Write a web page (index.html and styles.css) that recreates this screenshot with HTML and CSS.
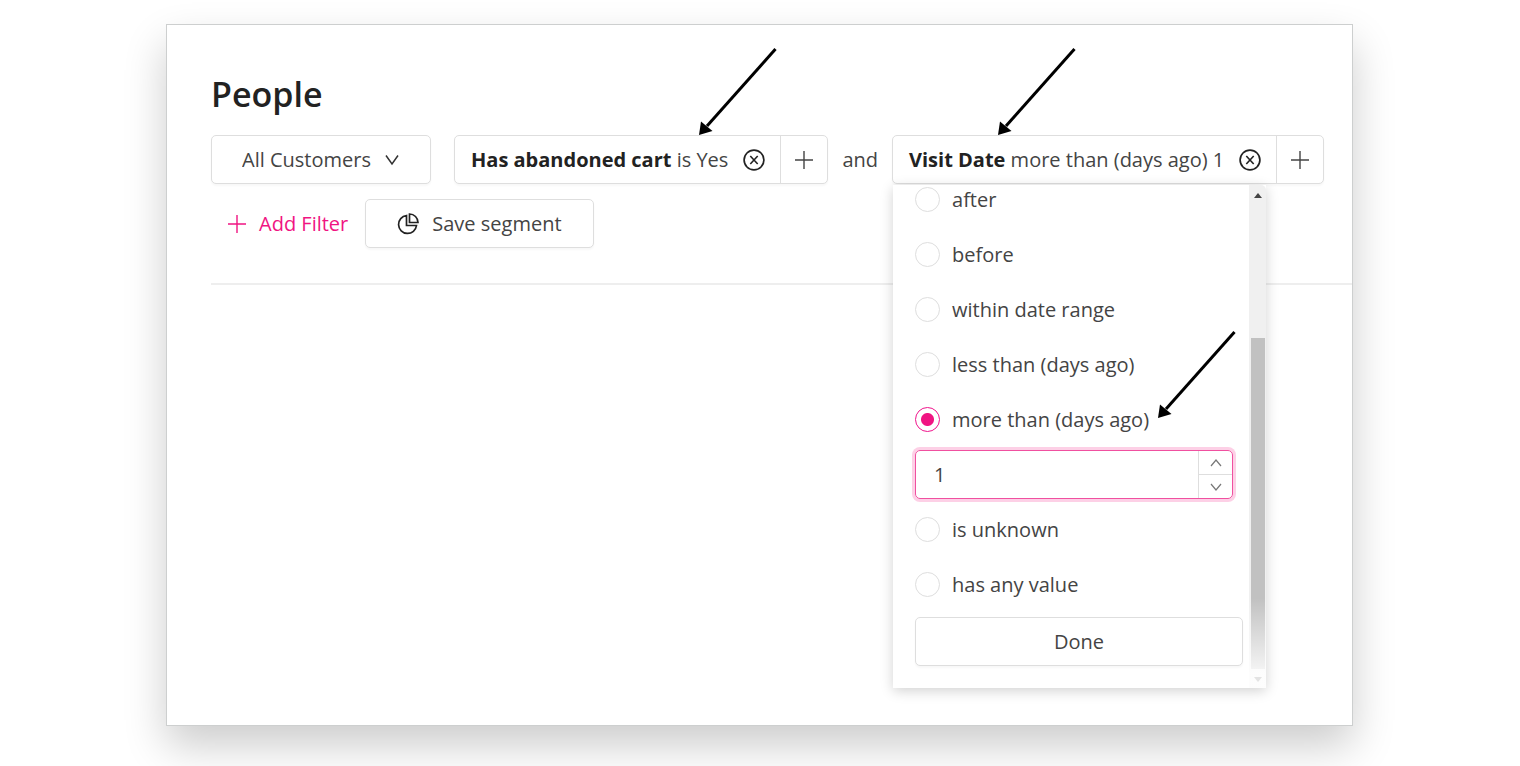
FILE: index.html
```
<!DOCTYPE html>
<html lang="en">
<head>
  <meta charset="UTF-8" />
  <meta name="viewport" content="width=device-width, initial-scale=1.0"/>
  <title>People</title>
  <link rel="stylesheet" href="styles.css">
</head>
<body>
  <svg class="defs" width="0" height="0">
    <symbol id="plus" viewBox="0 0 18 18"><path d="M9 0v18M0 9h18" fill="none" stroke="currentColor" stroke-width="1.4"/></symbol>
    <symbol id="close" viewBox="0 0 22 22"><path d="M7.3 7l7.4 8M14.7 7l-7.4 8" fill="none" stroke="currentColor" stroke-width="1.6"/><circle cx="11" cy="11" r="9.9" fill="none" stroke="currentColor" stroke-width="1.7"/></symbol>
    <symbol id="pointer" viewBox="0 0 80 88"><path d="M77.500 1L9 78" fill="none" stroke="#000" stroke-width="3"/><path d="M1 87L3 73.500L14.500 83z" fill="#000"/></symbol>
  </svg>

  <main class="card">
    <h1>People</h1>

    <!-- Filters -->
    <div class="filters">
      <div class="box segment">
        <select aria-label="Segment">
          <option>All Customers</option>
        </select>
        <svg class="chevron" width="14" height="12" viewBox="0 0 14 12"><path d="M1 1.500L7 10L13 1.500" fill="none" stroke="currentColor" stroke-width="1.5"/></svg>
      </div>

      <div class="box chip">
        <button class="chip-text"><span><b>Has abandoned cart</b> is Yes</span></button>
        <button class="chip-close" aria-label="Remove filter"><svg width="22" height="22"><use href="#close"/></svg></button>
        <button class="chip-add" aria-label="Add condition"><svg width="18" height="18"><use href="#plus"/></svg></button>
        <svg class="pointer pointer-cart" width="80" height="88"><use href="#pointer"/></svg>
      </div>

      <span class="and">and</span>

      <div class="box chip">
        <button class="chip-text"><span><b>Visit Date</b> more than (days ago) 1</span></button>
        <button class="chip-close" aria-label="Remove filter"><svg width="22" height="22"><use href="#close"/></svg></button>
        <button class="chip-add" aria-label="Add condition"><svg width="18" height="18"><use href="#plus"/></svg></button>
        <svg class="pointer pointer-date" width="80" height="88"><use href="#pointer"/></svg>

        <!-- Date condition menu -->
        <div class="menu">
          <div class="menu-body">
            <label class="option"><input type="radio" name="condition">after</label>
            <label class="option"><input type="radio" name="condition">before</label>
            <label class="option"><input type="radio" name="condition">within date range</label>
            <label class="option"><input type="radio" name="condition">less than (days ago)</label>
            <label class="option"><input type="radio" name="condition" checked>more than (days ago)
              <svg class="pointer pointer-option" width="80" height="88"><use href="#pointer"/></svg>
            </label>
            <div class="days-row">
              <div class="days">
                <input type="text" inputmode="numeric" value="1" aria-label="Days ago">
                <div class="stepper">
                  <button aria-label="Increase"><svg width="12" height="8" viewBox="0 0 12 8"><path d="M1 7L6 1L11 7" fill="none" stroke="currentColor" stroke-width="1.2"/></svg></button>
                  <button aria-label="Decrease"><svg width="12" height="8" viewBox="0 0 12 8"><path d="M1 1L6 7L11 1" fill="none" stroke="currentColor" stroke-width="1.2"/></svg></button>
                </div>
              </div>
            </div>
            <label class="option"><input type="radio" name="condition">is unknown</label>
            <label class="option"><input type="radio" name="condition">has any value</label>
            <button class="box done">Done</button>
          </div>
          <div class="scrollbar">
            <svg class="scroll-arrow" width="8" height="5" viewBox="0 0 8 5"><path d="M0 5L4 0L8 5z" fill="#444"/></svg>
            <div class="thumb"></div>
            <svg class="scroll-arrow" width="8" height="5" viewBox="0 0 8 5"><path d="M0 0L4 5L8 0z" fill="#444"/></svg>
          </div>
        </div>
      </div>

      <button class="add-filter"><svg width="18" height="18"><use href="#plus"/></svg>Add Filter</button>
      <button class="box save">
        <svg width="22" height="22" viewBox="0 0 22 22"><path d="M9.500 2.500A9 9 0 1 0 19.500 12.500H9.500z M12.500 1V9.500H21A8.500 8.500 0 0 0 12.500 1z" fill="none" stroke="currentColor" stroke-width="1.7"/></svg>
        Save segment
      </button>
    </div>
  </main>
</body>
</html>
```
FILE: styles.css
```
* {
  box-sizing: border-box;
}
body {
  margin: 0;
  padding: 24px 167px 40px 166px;
  background: #fff;
  color: #444;
  font-family: "Open Sans", "Noto Sans", sans-serif;
  font-size: 20px;
  line-height: 28px;
}
button, input, select {
  font: inherit;
  color: inherit;
  border: none;
  background: none;
  padding: 0;
  margin: 0;
}
svg {
  flex-shrink: 0;
}
.defs {
  position: absolute;
}
.card {
  min-height: 702px;
  padding: 44px 0 0 44px;
  border: 1px solid #cdcfcf;
  background: #fff;
  box-shadow: 0 20px 40px rgba(0, 0, 0, 0.2);
}
h1 {
  margin: 0;
  padding-bottom: 16px;
  color: #222;
  font-size: 34px;
  font-weight: 600;
  line-height: 50px;
}
.filters {
  display: flex;
  flex-wrap: wrap;
  align-items: center;
  gap: 15px 14px;
  padding: 0 20px 35px 0;
  border-bottom: 2px solid #eee;
}
.box {
  height: 49px;
  border: 1px solid #dedede;
  border-radius: 5px;
  background: #fff;
  box-shadow: 0 2px 2px rgba(0, 0, 0, 0.03);
}
.segment {
  display: flex;
  align-items: center;
  gap: 14px;
  margin-right: 9px;
  padding: 0 31px 0 30px;
}
.segment select {
  appearance: none;
  height: 100%;
}
.chevron {
  color: #333;
}
.chip {
  position: relative;
  display: flex;
}
.chip-text {
  padding: 0 8px 0 16px;
}
.chip-text b {
  color: #222;
}
.chip-close {
  display: flex;
  align-items: center;
  padding: 0 15px 0 7px;
  color: #222;
}
.chip-add {
  display: flex;
  align-items: center;
  justify-content: center;
  width: 47px;
  border-left: 1px solid #dedede;
}
.pointer {
  position: absolute;
  z-index: 2;
  pointer-events: none;
}
.pointer-cart {
  left: 243px;
  bottom: 100%;
}
.pointer-date {
  left: 104px;
  bottom: 100%;
}
.pointer-option {
  left: 242px;
  bottom: 28px;
}

/* menu */
.menu {
  position: absolute;
  top: 49px;
  left: 0;
  display: flex;
  width: 373px;
  height: 503px;
  background: #fff;
  box-shadow: 0 3px 12px rgba(0, 0, 0, 0.18);
}
.menu-body {
  flex: 1;
  display: flex;
  flex-direction: column;
  justify-content: flex-end;
  padding: 0 6px 22px 22px;
  overflow: hidden;
}
.option {
  position: relative;
  display: flex;
  flex-shrink: 0;
  align-items: center;
  gap: 12px;
  height: 55px;
}
.option input {
  appearance: none;
  width: 25px;
  height: 25px;
  border: 1px solid #dedede;
  border-radius: 50%;
}
.option input:checked {
  border-color: #f0148c;
  background: radial-gradient(circle, #f01482 6px, #fff 7px);
}
.days-row {
  display: flex;
  flex-shrink: 0;
  align-items: center;
  height: 55px;
  padding-right: 10px;
}
.days {
  flex: 1;
  display: flex;
  height: 49px;
  border: 1px solid #f050a0;
  border-radius: 5px;
  box-shadow: 0 0 0 3px #fdd0e6;
}
.days input {
  flex: 1;
  min-width: 0;
  padding-left: 18px;
  outline: none;
}
.stepper {
  display: flex;
  flex-direction: column;
  width: 34px;
  border-left: 1px solid #dedede;
  color: #777;
}
.stepper button {
  flex: 1;
  display: flex;
  align-items: center;
  justify-content: center;
}
.stepper button + button {
  border-top: 1px solid #dedede;
}
.done {
  flex-shrink: 0;
  margin-top: 5px;
}
.scrollbar {
  position: relative;
  display: flex;
  flex-direction: column;
  align-items: center;
  width: 17px;
  padding: 8px 0 6px;
  border-top-right-radius: 5px;
  background: #f0f0f0;
}
.scrollbar::after {
  content: "";
  position: absolute;
  inset: auto 0 0;
  height: 90px;
  background: linear-gradient(rgba(255, 255, 255, 0), rgba(255, 255, 255, 0.85) 75px);
}
.thumb {
  width: 14px;
  height: 331px;
  margin: auto 0 8px;
  background: #c1c1c1;
}

.add-filter {
  display: flex;
  align-items: center;
  gap: 13px;
  height: 49px;
  padding: 0 3px 0 17px;
  color: #f01482;
}
.save {
  display: flex;
  align-items: center;
  gap: 13px;
  padding: 0 31px;
}
.save svg {
  color: #222;
}
```
